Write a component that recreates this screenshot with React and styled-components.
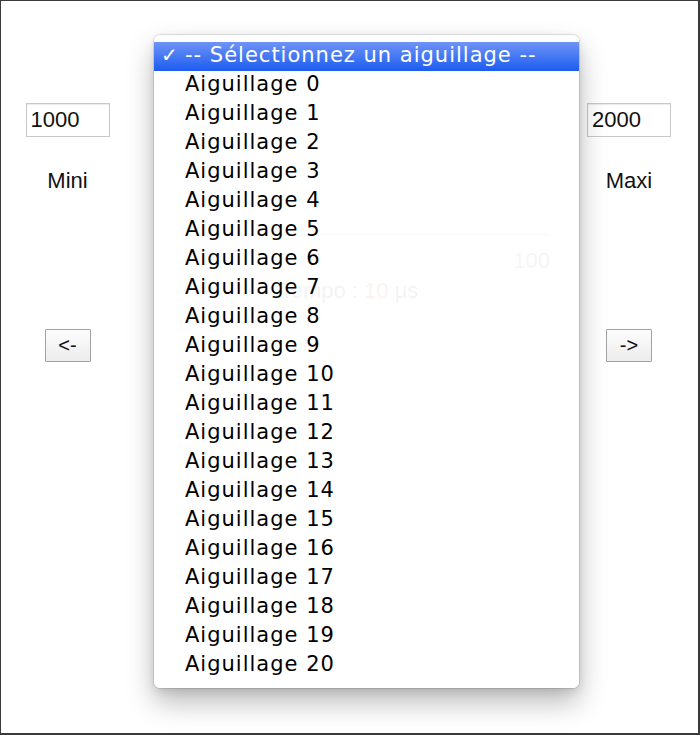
import React from 'react';
import styled, { createGlobalStyle } from 'styled-components';

const GlobalStyle = createGlobalStyle`
  html, body {
    margin: 0;
    padding: 0;
    background: #fff;
  }
  body {
    font-family: "Liberation Sans", Arial, sans-serif;
  }
`;

const aiguillages = Array.from({ length: 21 }, (_, i) => `Aiguillage ${i}`);

const App = () => {
  return (
    <>
      <GlobalStyle />
      <Frame>
        <Side>
          <NumberInput defaultValue="1000" />
          <Label>Mini</Label>
          <ArrowButton>&lt;-</ArrowButton>
        </Side>

        <Center>
          <NativeSelect defaultValue="">
            <option value="">-- Sélectionnez un aiguillage --</option>
            {aiguillages.map((a, i) => (
              <option key={a} value={i}>{a}</option>
            ))}
          </NativeSelect>
          <Track />
          <Scale>100</Scale>
          <Tempo>
            Tempo : <Value>10</Value> µs
          </Tempo>
        </Center>

        <Side>
          <NumberInput defaultValue="2000" />
          <Label>Maxi</Label>
          <ArrowButton>-&gt;</ArrowButton>
        </Side>

        {/* menu deroulant ouvert, par dessus la page */}
        <Menu>
          <MenuItem $selected>
            <Check>✓</Check>-- Sélectionnez un aiguillage --
          </MenuItem>
          {aiguillages.map((a) => (
            <MenuItem key={a}>{a}</MenuItem>
          ))}
        </Menu>
      </Frame>
    </>
  );
};

const Frame = styled.div`
  position: relative;
  box-sizing: border-box;
  width: 700px;
  height: 735px;
  border-style: solid;
  border-color: #3a3a3a;
  border-width: 1px 2px 2px 1px;
  display: grid;
  grid-template-columns: 133px 1fr 138px;
  overflow: hidden;
`;

const Side = styled.div`
  display: flex;
  flex-direction: column;
  align-items: center;
  padding-top: 102px;
`;

const NumberInput = styled.input`
  box-sizing: border-box;
  width: 84px;
  height: 34px;
  margin: 0;
  padding: 0 4px;
  border: 1px solid #c9c9c9;
  box-shadow: inset 0 1px 1px rgba(0, 0, 0, 0.08);
  font-family: "Liberation Sans", Arial, sans-serif;
  font-size: 22px;
  color: #111;
  outline: none;
`;

const Label = styled.div`
  margin-top: 31px;
  font-size: 22px;
  line-height: 26px;
  color: #111;
`;

const ArrowButton = styled.button`
  box-sizing: border-box;
  margin-top: 135px;
  width: 46px;
  height: 33px;
  padding: 0;
  border: 1px solid #a3a3a3;
  border-radius: 1px;
  background: linear-gradient(#fdfdfd, #ececec);
  font-family: "Liberation Sans", Arial, sans-serif;
  font-size: 20px;
  color: #111;
`;

const Center = styled.div`
  display: flex;
  flex-direction: column;
  padding: 41px 10px 0 56px;
`;

const NativeSelect = styled.select`
  height: 29px;
  font-size: 18px;
`;

const Track = styled.div`
  margin-top: 162px;
  height: 3px;
  border-radius: 2px;
  background: #c4c4c4;
`;

const Scale = styled.div`
  margin-top: 12px;
  text-align: right;
  font-size: 22px;
  line-height: 26px;
  color: #555;
`;

const Tempo = styled.div`
  margin-top: 4px;
  padding-right: 42px;
  text-align: center;
  font-size: 22px;
  line-height: 26px;
  color: #333;
`;

const Value = styled.span`
  color: #ff0000;
`;

const Menu = styled.div`
  position: absolute;
  left: 153px;
  top: 34px;
  width: 425px;
  padding: 7px 0 8px;
  border-radius: 6px;
  background: rgba(255, 255, 255, 0.94);
  box-shadow: 0 0 0 1px rgba(0, 0, 0, 0.1), 0 3px 8px rgba(0, 0, 0, 0.1),
    0 14px 28px rgba(0, 0, 0, 0.28);
`;

const MenuItem = styled.div`
  position: relative;
  box-sizing: border-box;
  height: 29px;
  display: flex;
  align-items: center;
  padding: 0 0 3px 31px;
  font-family: "DejaVu Sans", sans-serif;
  font-size: 21px;
  letter-spacing: 1px;
  white-space: nowrap;
  color: ${(p) => (p.$selected ? '#fff' : '#000')};
  background: ${(p) =>
    p.$selected ? 'linear-gradient(#6f94f6, #1c5cf0)' : 'transparent'};
`;

const Check = styled.span`
  position: absolute;
  left: 7px;
  font-size: 20px;
  font-weight: bold;
  letter-spacing: 0;
`;

export default App;
